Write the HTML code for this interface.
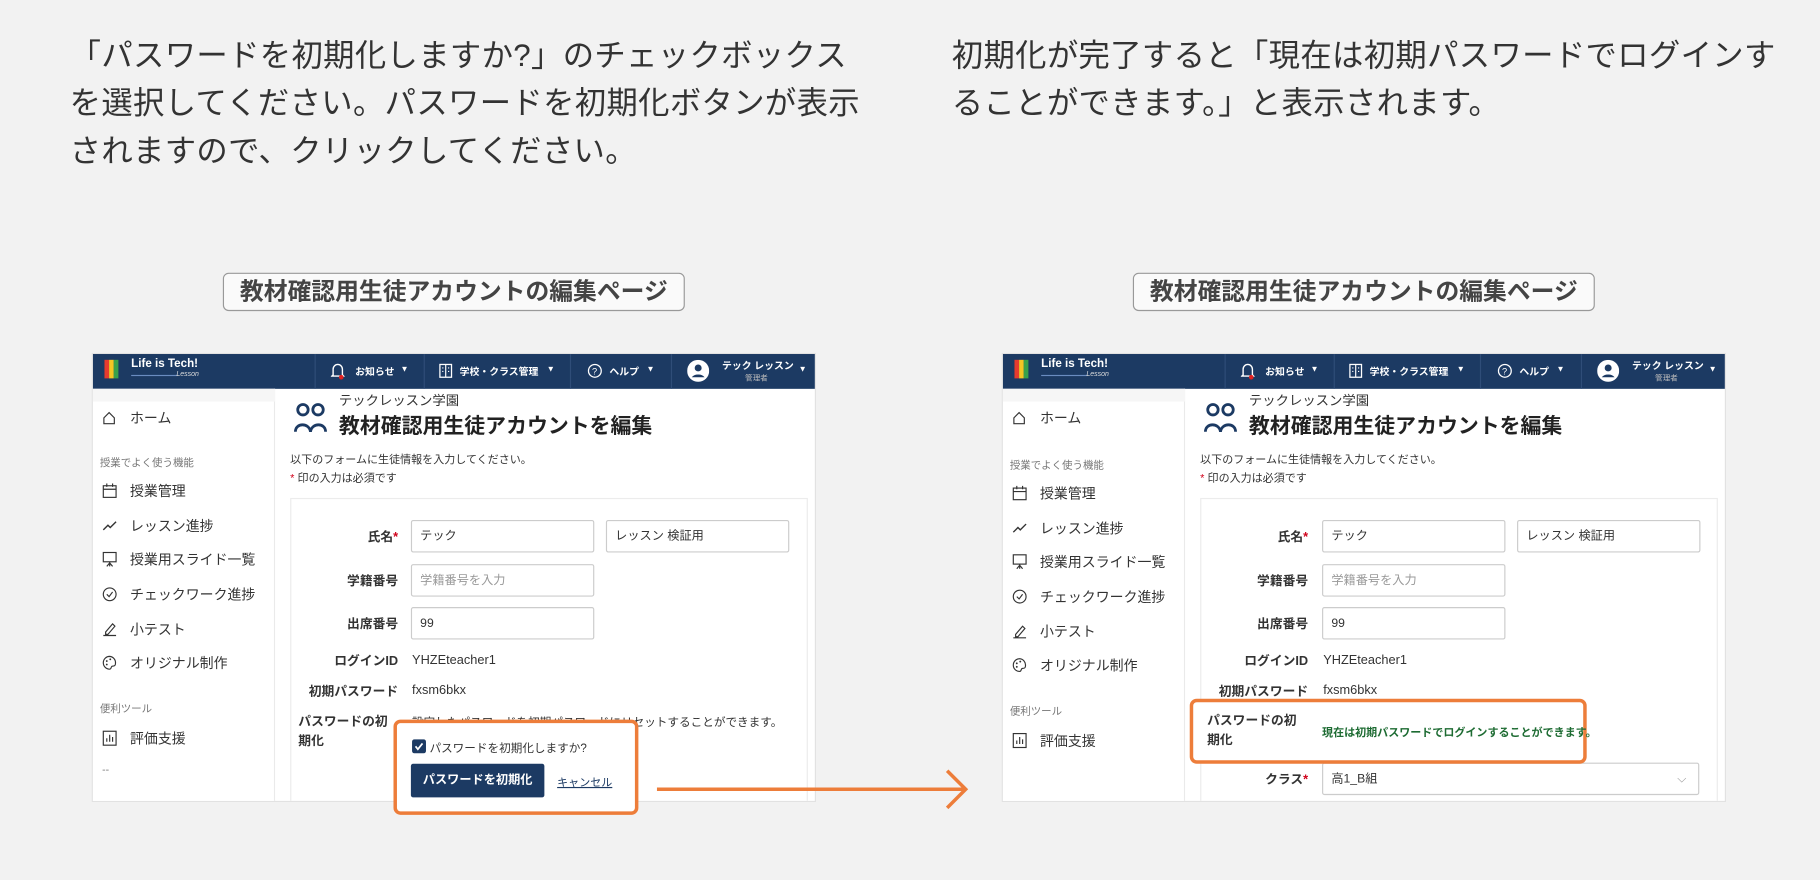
<!DOCTYPE html>
<html><head><meta charset="utf-8">
<style>
*{margin:0;padding:0;box-sizing:border-box}
html,body{width:1820px;height:880px;overflow:hidden;background:#f2f2f2}
body{font-family:"Liberation Sans","Noto Sans CJK JP",sans-serif;color:#333}
#w{position:absolute;left:0;top:0;width:1568px;height:758px;transform:scale(1.16071);transform-origin:0 0}
.a{position:absolute;white-space:nowrap}
.big{font-size:27px;line-height:41px;color:#333;letter-spacing:0.3px}
.lbl{position:absolute;border:1.5px solid #999;border-radius:5px;background:#fafafa;font-weight:bold;font-size:20.5px;color:#444;text-align:center;line-height:31px}
.shot{position:absolute;width:624px;height:387px;background:#fff;overflow:hidden;border:1px solid #e2e2e2}
.nav{position:absolute;left:0;top:0;width:624px;height:30px;background:#1c3a63;color:#fff}
.sep{position:absolute;top:0;width:1px;height:30px;background:#2f4d78}
.nt{position:absolute;font-size:8.5px;color:#fff;top:9px;font-weight:bold}
.side{position:absolute;left:0;top:30px;width:157px;height:357px;background:#fff;border-right:1px solid #eaeaea}
.si{position:absolute;left:32px;font-size:12px;color:#333;transform:translateY(-50%)}
.sl{position:absolute;left:6px;font-size:9px;color:#777;transform:translateY(-50%)}
.ic{position:absolute;left:8px;transform:translateY(-50%)}
.c{position:absolute;transform:translateY(-50%);white-space:nowrap}
.fl{position:absolute;right:359px;font-size:11px;font-weight:bold;color:#333;transform:translateY(-50%);white-space:nowrap}
.inp{position:absolute;border:1px solid #ccc;border-radius:2px;height:28px;font-size:10.5px;line-height:26px;padding-left:7px;color:#333;background:#fff}
.red{color:#d0021b}
.ob{position:absolute;border:3px solid #ed7d3a;border-radius:6px;background:#fff}
</style></head><body><div id="w">

<div class="a big" style="left:60px;top:28px">「パスワードを初期化しますか?」のチェックボックス<br>を選択してください。パスワードを初期化ボタンが表示<br>されますので、クリックしてください。</div>
<div class="a big" style="left:820px;top:28px">初期化が完了すると「現在は初期パスワードでログインす<br>ることができます。」と表示されます。</div>

<div class="lbl" style="left:192px;top:235px;width:398px;height:33px">教材確認用生徒アカウントの編集ページ</div>
<div class="lbl" style="left:976px;top:235px;width:398px;height:33px">教材確認用生徒アカウントの編集ページ</div>

<!-- LEFT SHOT -->
<div class="shot" style="left:79px;top:304px">
 <div class="nav">
  <div class="a" style="left:10px;top:5px;width:4px;height:16px;background:#e63b2e"></div>
  <div class="a" style="left:14px;top:5px;width:4px;height:16px;background:#f5c623"></div>
  <div class="a" style="left:18px;top:5px;width:4px;height:16px;background:#3aa14a"></div>
  <div class="a" style="left:33px;top:3px;font-size:10px;font-weight:bold;color:#fff">Life is Tech!</div>
  <div class="a" style="left:33px;top:18px;width:40px;height:1px;background:#6a8cc0"></div>
  <div class="a" style="left:72px;top:15px;font-size:6px;font-style:italic;color:#ddd">Lesson</div>
  <div class="sep" style="left:191px"></div><div class="sep" style="left:285px"></div><div class="sep" style="left:411px"></div><div class="sep" style="left:498px"></div>
  <svg class="a" style="left:205px;top:7px" width="12" height="15" viewBox="0 0 12 15"><path d="M2 11V6a4 4 0 0 1 8 0v5l1 1H1z" fill="none" stroke="#fff" stroke-width="1.2"/><circle cx="9" cy="13" r="2" fill="#e02020"/></svg>
  <div class="nt" style="left:226px">お知らせ</div><div class="nt" style="left:265px;font-size:7px;top:10px">▼</div>
  <svg class="a" style="left:298px;top:8px" width="12" height="13"><rect x="1" y="1" width="10" height="11" fill="none" stroke="#fff" stroke-width="1.1"/><path d="M6 1v11M3 4h1M3 7h1M8 4h1M8 7h1" stroke="#fff"/></svg>
  <div class="nt" style="left:316px">学校・クラス管理</div><div class="nt" style="left:391px;font-size:7px;top:10px">▼</div>
  <svg class="a" style="left:426px;top:8px" width="13" height="13"><circle cx="6.5" cy="6.5" r="5.5" fill="none" stroke="#fff" stroke-width="1.1"/><text x="4" y="9.5" font-size="8" fill="#fff" font-family="Liberation Sans">?</text></svg>
  <div class="nt" style="left:445px">ヘルプ</div><div class="nt" style="left:477px;font-size:7px;top:10px">▼</div>
  <svg class="a" style="left:512px;top:5px" width="19" height="19"><circle cx="9.5" cy="9.5" r="9.5" fill="#fff"/><circle cx="9.5" cy="7" r="3" fill="#1c3a63"/><path d="M4 15a6 4 0 0 1 11 0" fill="#1c3a63"/></svg>
  <div class="nt" style="left:542px;top:4px;font-size:8.5px">テック レッスン</div>
  <div class="nt" style="left:562px;top:15px;font-size:6.5px;color:#bbb;font-weight:normal">管理者</div>
  <div class="nt" style="left:608px;font-size:7px;top:10px">▼</div>
 </div>
 <div class="side">
  <div class="a" style="left:0;top:0;width:157px;height:11px;background:#f6f6f6"></div>
  <svg class="ic" style="top:25px" width="12" height="12"><path d="M1.5 6L6 1.5 10.5 6V11h-9z" fill="none" stroke="#333"/></svg><div class="si" style="top:25px">ホーム</div>
  <div class="sl" style="top:63px">授業でよく使う機能</div>
  <svg class="ic" style="top:88px" width="13" height="13"><rect x="1" y="2" width="11" height="10" fill="none" stroke="#333"/><path d="M1 5h11M4 0v3M9 0v3" stroke="#333"/></svg><div class="si" style="top:88px">授業管理</div>
  <svg class="ic" style="top:118px" width="13" height="13"><path d="M1 10l4-4 2 2 5-5" fill="none" stroke="#333" stroke-width="1.2"/></svg><div class="si" style="top:118px">レッスン進捗</div>
  <svg class="ic" style="top:147px" width="13" height="14"><rect x="1" y="1" width="11" height="8" fill="none" stroke="#333"/><path d="M6.5 9v4M4 13l2.5-3 2.5 3" fill="none" stroke="#333"/></svg><div class="si" style="top:147px">授業用スライド一覧</div>
  <svg class="ic" style="top:177px" width="13" height="13"><circle cx="6.5" cy="6.5" r="5.5" fill="none" stroke="#333"/><path d="M4 6.5l2 2 3-4" fill="none" stroke="#333"/></svg><div class="si" style="top:177px">チェックワーク進捗</div>
  <svg class="ic" style="top:207px" width="13" height="13"><path d="M3 9l6-7 2 2-6 7H3zM1 12h11" fill="none" stroke="#333"/></svg><div class="si" style="top:207px">小テスト</div>
  <svg class="ic" style="top:236px" width="13" height="13"><path d="M6.5 1a5.5 5.5 0 0 0 0 11c1.5 0 1-2 2-2.5s3 .5 3-2.5A5.5 5.5 0 0 0 6.5 1z" fill="none" stroke="#333"/><circle cx="4" cy="5" r=".8" fill="#333"/><circle cx="7" cy="3.5" r=".8" fill="#333"/><circle cx="4" cy="8" r=".8" fill="#333"/></svg><div class="si" style="top:236px">オリジナル制作</div>
  <div class="sl" style="top:275px">便利ツール</div>
  <svg class="ic" style="top:301px" width="13" height="14"><rect x="1" y="1" width="11" height="12" fill="none" stroke="#333"/><path d="M4 10V7M6.5 10V4M9 10V6" stroke="#333"/></svg><div class="si" style="top:301px">評価支援</div>
  <div class="sl" style="top:328px;left:8px">--</div>
 </div>
 <svg class="a" style="left:173px;top:41px" width="30" height="30"><circle cx="8" cy="7" r="4.5" fill="none" stroke="#1c3a63" stroke-width="2.4"/><circle cx="21" cy="7" r="4.5" fill="none" stroke="#1c3a63" stroke-width="2.4"/><path d="M1.5 26c0-8 12-8 13 0M14.5 26c1-8 13-8 13 0" fill="none" stroke="#1c3a63" stroke-width="2.4"/></svg>
 <div class="c" style="left:212px;top:40px;font-size:11.5px">テックレッスン学園</div>
 <div class="c" style="left:212px;top:61px;font-size:18px;font-weight:bold;color:#222">教材確認用生徒アカウントを編集</div>
 <div class="c" style="left:170px;top:90px;font-size:9.5px">以下のフォームに生徒情報を入力してください。</div>
 <div class="c" style="left:170px;top:106px;font-size:9.5px"><span class="red">*</span> 印の入力は必須です</div>
 <div class="a" style="left:170px;top:124px;width:446px;height:270px;border:1px solid #ececec"></div>
 <div class="fl" style="top:157px">氏名<span class="red">*</span></div>
 <div class="inp" style="left:274px;top:143px;width:158px">テック</div>
 <div class="inp" style="left:442px;top:143px;width:158px">レッスン 検証用</div>
 <div class="fl" style="top:195px">学籍番号</div>
 <div class="inp" style="left:274px;top:181px;width:158px;color:#999">学籍番号を入力</div>
 <div class="fl" style="top:232px">出席番号</div>
 <div class="inp" style="left:274px;top:218px;width:158px">99</div>
 <div class="fl" style="top:264px">ログインID</div><div class="c" style="left:275px;top:264px;font-size:11px">YHZEteacher1</div>
 <div class="fl" style="top:290px">初期パスワード</div><div class="c" style="left:275px;top:290px;font-size:11px">fxsm6bkx</div>
 <div class="c" style="left:177px;top:316px;font-size:11px;font-weight:bold">パスワードの初</div>
 <div class="c" style="left:177px;top:333px;font-size:11px;font-weight:bold">期化</div>
 <div class="c" style="left:275px;top:316px;font-size:10px">設定したパスワードを初期パスワードにリセットすることができます。</div>
</div>
<div class="ob" style="left:339px;top:620px;width:211px;height:82px"></div>
<div class="a" style="left:355px;top:637px;width:12px;height:12px;background:#1c3a63;border-radius:2px"></div>
<svg class="a" style="left:355px;top:637px" width="12" height="12"><path d="M3 6l2 2.5 4-5" fill="none" stroke="#fff" stroke-width="1.5"/></svg>
<div class="a" style="left:370px;top:636px;font-size:10px">パスワードを初期化しますか?</div>
<div class="a" style="left:354px;top:658px;width:115px;height:29px;background:#1c3a63;border-radius:2px;color:#fff;font-size:10.5px;font-weight:bold;text-align:center;line-height:29px">パスワードを初期化</div>
<div class="a" style="left:480px;top:666px;font-size:9.5px;color:#1c3a63;text-decoration:underline">キャンセル</div>

<!-- arrow -->
<svg class="a" style="left:560px;top:660px" width="280" height="40"><path d="M6 20H272" stroke="#ed7d3a" stroke-width="3"/><path d="M256 4l16 16-16 16" fill="none" stroke="#ed7d3a" stroke-width="3"/></svg>

<!-- RIGHT SHOT -->
<div class="shot" style="left:863px;top:304px">
 <div class="nav">
  <div class="a" style="left:10px;top:5px;width:4px;height:16px;background:#e63b2e"></div>
  <div class="a" style="left:14px;top:5px;width:4px;height:16px;background:#f5c623"></div>
  <div class="a" style="left:18px;top:5px;width:4px;height:16px;background:#3aa14a"></div>
  <div class="a" style="left:33px;top:3px;font-size:10px;font-weight:bold;color:#fff">Life is Tech!</div>
  <div class="a" style="left:33px;top:18px;width:40px;height:1px;background:#6a8cc0"></div>
  <div class="a" style="left:72px;top:15px;font-size:6px;font-style:italic;color:#ddd">Lesson</div>
  <div class="sep" style="left:191px"></div><div class="sep" style="left:285px"></div><div class="sep" style="left:411px"></div><div class="sep" style="left:498px"></div>
  <svg class="a" style="left:205px;top:7px" width="12" height="15" viewBox="0 0 12 15"><path d="M2 11V6a4 4 0 0 1 8 0v5l1 1H1z" fill="none" stroke="#fff" stroke-width="1.2"/><circle cx="9" cy="13" r="2" fill="#e02020"/></svg>
  <div class="nt" style="left:226px">お知らせ</div><div class="nt" style="left:265px;font-size:7px;top:10px">▼</div>
  <svg class="a" style="left:298px;top:8px" width="12" height="13"><rect x="1" y="1" width="10" height="11" fill="none" stroke="#fff" stroke-width="1.1"/><path d="M6 1v11M3 4h1M3 7h1M8 4h1M8 7h1" stroke="#fff"/></svg>
  <div class="nt" style="left:316px">学校・クラス管理</div><div class="nt" style="left:391px;font-size:7px;top:10px">▼</div>
  <svg class="a" style="left:426px;top:8px" width="13" height="13"><circle cx="6.5" cy="6.5" r="5.5" fill="none" stroke="#fff" stroke-width="1.1"/><text x="4" y="9.5" font-size="8" fill="#fff" font-family="Liberation Sans">?</text></svg>
  <div class="nt" style="left:445px">ヘルプ</div><div class="nt" style="left:477px;font-size:7px;top:10px">▼</div>
  <svg class="a" style="left:512px;top:5px" width="19" height="19"><circle cx="9.5" cy="9.5" r="9.5" fill="#fff"/><circle cx="9.5" cy="7" r="3" fill="#1c3a63"/><path d="M4 15a6 4 0 0 1 11 0" fill="#1c3a63"/></svg>
  <div class="nt" style="left:542px;top:4px;font-size:8.5px">テック レッスン</div>
  <div class="nt" style="left:562px;top:15px;font-size:6.5px;color:#bbb;font-weight:normal">管理者</div>
  <div class="nt" style="left:608px;font-size:7px;top:10px">▼</div>
 </div>
 <div class="side">
  <div class="a" style="left:0;top:0;width:157px;height:11px;background:#f6f6f6"></div>
  <svg class="ic" style="top:25px" width="12" height="12"><path d="M1.5 6L6 1.5 10.5 6V11h-9z" fill="none" stroke="#333"/></svg><div class="si" style="top:25px">ホーム</div>
  <div class="sl" style="top:65px">授業でよく使う機能</div>
  <svg class="ic" style="top:90px" width="13" height="13"><rect x="1" y="2" width="11" height="10" fill="none" stroke="#333"/><path d="M1 5h11M4 0v3M9 0v3" stroke="#333"/></svg><div class="si" style="top:90px">授業管理</div>
  <svg class="ic" style="top:120px" width="13" height="13"><path d="M1 10l4-4 2 2 5-5" fill="none" stroke="#333" stroke-width="1.2"/></svg><div class="si" style="top:120px">レッスン進捗</div>
  <svg class="ic" style="top:149px" width="13" height="14"><rect x="1" y="1" width="11" height="8" fill="none" stroke="#333"/><path d="M6.5 9v4M4 13l2.5-3 2.5 3" fill="none" stroke="#333"/></svg><div class="si" style="top:149px">授業用スライド一覧</div>
  <svg class="ic" style="top:179px" width="13" height="13"><circle cx="6.5" cy="6.5" r="5.5" fill="none" stroke="#333"/><path d="M4 6.5l2 2 3-4" fill="none" stroke="#333"/></svg><div class="si" style="top:179px">チェックワーク進捗</div>
  <svg class="ic" style="top:209px" width="13" height="13"><path d="M3 9l6-7 2 2-6 7H3zM1 12h11" fill="none" stroke="#333"/></svg><div class="si" style="top:209px">小テスト</div>
  <svg class="ic" style="top:238px" width="13" height="13"><path d="M6.5 1a5.5 5.5 0 0 0 0 11c1.5 0 1-2 2-2.5s3 .5 3-2.5A5.5 5.5 0 0 0 6.5 1z" fill="none" stroke="#333"/><circle cx="4" cy="5" r=".8" fill="#333"/><circle cx="7" cy="3.5" r=".8" fill="#333"/><circle cx="4" cy="8" r=".8" fill="#333"/></svg><div class="si" style="top:238px">オリジナル制作</div>
  <div class="sl" style="top:277px">便利ツール</div>
  <svg class="ic" style="top:303px" width="13" height="14"><rect x="1" y="1" width="11" height="12" fill="none" stroke="#333"/><path d="M4 10V7M6.5 10V4M9 10V6" stroke="#333"/></svg><div class="si" style="top:303px">評価支援</div>
 </div>
 <svg class="a" style="left:173px;top:41px" width="30" height="30"><circle cx="8" cy="7" r="4.5" fill="none" stroke="#1c3a63" stroke-width="2.4"/><circle cx="21" cy="7" r="4.5" fill="none" stroke="#1c3a63" stroke-width="2.4"/><path d="M1.5 26c0-8 12-8 13 0M14.5 26c1-8 13-8 13 0" fill="none" stroke="#1c3a63" stroke-width="2.4"/></svg>
 <div class="c" style="left:212px;top:40px;font-size:11.5px">テックレッスン学園</div>
 <div class="c" style="left:212px;top:61px;font-size:18px;font-weight:bold;color:#222">教材確認用生徒アカウントを編集</div>
 <div class="c" style="left:170px;top:90px;font-size:9.5px">以下のフォームに生徒情報を入力してください。</div>
 <div class="c" style="left:170px;top:106px;font-size:9.5px"><span class="red">*</span> 印の入力は必須です</div>
 <div class="a" style="left:170px;top:124px;width:446px;height:270px;border:1px solid #ececec"></div>
 <div class="fl" style="top:157px">氏名<span class="red">*</span></div>
 <div class="inp" style="left:275px;top:143px;width:158px">テック</div>
 <div class="inp" style="left:443px;top:143px;width:158px">レッスン 検証用</div>
 <div class="fl" style="top:195px">学籍番号</div>
 <div class="inp" style="left:275px;top:181px;width:158px;color:#999">学籍番号を入力</div>
 <div class="fl" style="top:232px">出席番号</div>
 <div class="inp" style="left:275px;top:218px;width:158px">99</div>
 <div class="fl" style="top:264px">ログインID</div><div class="c" style="left:276px;top:264px;font-size:11px">YHZEteacher1</div>
 <div class="fl" style="top:290px">初期パスワード</div><div class="c" style="left:276px;top:290px;font-size:11px">fxsm6bkx</div>
 <div class="fl" style="top:366px">クラス<span class="red">*</span></div>
 <div class="inp" style="left:275px;top:352px;width:325px">高1_B組<span style="position:absolute;right:10px;color:#999">⌵</span></div>
</div>
<div class="ob" style="left:1025px;top:602px;width:342px;height:56px"></div>
<div class="a" style="left:1040px;top:612px;font-size:11px;font-weight:bold">パスワードの初</div>
<div class="a" style="left:1040px;top:629px;font-size:11px;font-weight:bold">期化</div>
<div class="a" style="left:1139px;top:623px;font-size:9.5px;font-weight:bold;color:#1d6b32">現在は初期パスワードでログインすることができます。</div>

</div></body></html>
